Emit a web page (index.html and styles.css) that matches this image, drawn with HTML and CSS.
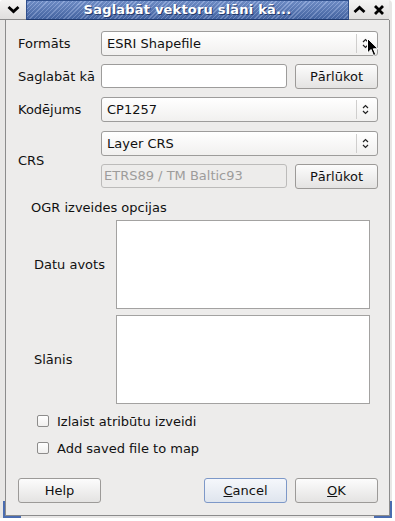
FILE: index.html
```html
<!DOCTYPE html>
<html lang="lv">
<head>
    <meta charset="UTF-8">
    <title>Saglabāt vektoru slāni kā...</title>
    <link rel="stylesheet" href="styles.css">
</head>
<body>
    <div class="window">
        <!-- Loga virsraksts -->
        <div class="titlebar">
            <div class="tb-button tb-menu">
                <svg width="13" height="9" viewBox="0 0 13 9"><path d="M1.5 2 L6.5 6.5 L11.5 2" fill="none" stroke="#000" stroke-width="2.8"/></svg>
            </div>
            <div class="tb-title">Saglabāt vektoru slāni kā...</div>
            <div class="tb-button">
                <svg width="13" height="9" viewBox="0 0 13 9"><path d="M1.5 7 L6.5 2.5 L11.5 7" fill="none" stroke="#000" stroke-width="2.8"/></svg>
            </div>
            <div class="tb-button">
                <svg width="12" height="12" viewBox="0 0 12 12"><path d="M2 2 L10 10 M10 2 L2 10" fill="none" stroke="#000" stroke-width="2.8"/></svg>
            </div>
        </div>

        <div class="client">
            <div class="row first">
                <span class="label">Formāts</span>
                <div class="combo">
                    <span class="combo-text">ESRI Shapefile</span>
                    <span class="combo-sep"></span>
                    <svg class="combo-arrow" width="7" height="11" viewBox="0 0 7 11"><path d="M1 4 L3.5 1.5 L6 4 M1 7 L3.5 9.5 L6 7" fill="none" stroke="#222" stroke-width="1.2"/></svg>
                </div>
            </div>

            <div class="row">
                <span class="label">Saglabāt kā</span>
                <div class="field-pair">
                    <div class="entry"></div>
                    <button class="btn browse">Pārlūkot</button>
                </div>
            </div>

            <div class="row">
                <span class="label">Kodējums</span>
                <div class="combo">
                    <span class="combo-text">CP1257</span>
                    <span class="combo-sep"></span>
                    <svg class="combo-arrow" width="7" height="11" viewBox="0 0 7 11"><path d="M1 4 L3.5 1.5 L6 4 M1 7 L3.5 9.5 L6 7" fill="none" stroke="#222" stroke-width="1.2"/></svg>
                </div>
            </div>

            <div class="row crs">
                <span class="label">CRS</span>
                <div class="crs-fields">
                    <div class="combo">
                        <span class="combo-text">Layer CRS</span>
                        <span class="combo-sep"></span>
                        <svg class="combo-arrow" width="7" height="11" viewBox="0 0 7 11"><path d="M1 4 L3.5 1.5 L6 4 M1 7 L3.5 9.5 L6 7" fill="none" stroke="#222" stroke-width="1.2"/></svg>
                    </div>
                    <div class="field-pair">
                        <div class="entry disabled">ETRS89 / TM Baltic93</div>
                        <button class="btn browse">Pārlūkot</button>
                    </div>
                </div>
            </div>

            <!-- OGR opcijas -->
            <div class="group-title">OGR izveides opcijas</div>
            <div class="group">
                <div class="group-row">
                    <span class="group-label">Datu avots</span>
                    <div class="textarea"></div>
                </div>
                <div class="group-row second">
                    <span class="group-label">Slānis</span>
                    <div class="textarea"></div>
                </div>
            </div>

            <label class="check first">
                <span class="box"></span>
                <span>Izlaist atribūtu izveidi</span>
            </label>
            <label class="check">
                <span class="box"></span>
                <span>Add saved file to map</span>
            </label>

            <div class="buttons">
                <button class="btn">Help</button>
                <div class="spacer"></div>
                <button class="btn focused"><u>C</u>ancel</button>
                <button class="btn"><u>O</u>K</button>
            </div>

            <span class="corner left"></span>
            <span class="corner right"></span>
        </div>

        <!-- peles kursors -->
        <svg class="cursor" width="12" height="19" viewBox="0 0 12 19"><path d="M0.5 0.5 L0.5 15 L4 11.5 L6.5 17.5 L8.8 16.5 L6.3 10.8 L11 10.8 Z" fill="#000" stroke="#fff" stroke-width="1"/></svg>
    </div>
</body>
</html>
```

FILE: styles.css
```css
body {
    margin: 0;
    background-color: #fff;
    font-family: "DejaVu Sans", sans-serif;
    font-size: 13px;
    color: #111;
}

.window {
    position: relative;
    width: 392px;
    height: 518px;
    background-color: #e8e7e6;
    border-radius: 4px 4px 0 0;
    display: flex;
    flex-direction: column;
}

.titlebar {
    display: flex;
    height: 20px;
}

.tb-button {
    width: 20px;
    height: 19px;
    display: flex;
    align-items: center;
    justify-content: center;
    background: linear-gradient(#f4f4f3, #e0dfde);
    border-bottom: 1px solid #8c8c8c;
}

.tb-menu {
    width: 26px;
    border-radius: 4px 0 0 0;
}

.tb-title {
    width: 321px;
    height: 18px;
    border: 1px solid #2f4f8c;
    border-bottom-color: #1f3a70;
    background:
        linear-gradient(rgba(255, 255, 255, 0.18), rgba(0, 0, 0, 0.12)),
        repeating-linear-gradient(135deg, #4d71b6 0, #4d71b6 2px, #7896d2 2px, #7896d2 3px);
    color: #fff;
    font-weight: bold;
    font-size: 13px;
    line-height: 18px;
    text-align: center;
    text-shadow: 1px 1px 0 #23396b;
    letter-spacing: 0.2px;
}

.client {
    position: relative;
    margin: 0 2px 0 5px;
    height: 495px;
    border: 1px solid #8c8c8c;
    border-top: 0;
    background-color: #edeceb;
    padding: 0 11px 0 12px;
}

.row {
    display: flex;
    align-items: center;
    margin-top: 8px;
}

.row.first {
    margin-top: 11px;
}

.row.crs {
    margin-top: 9px;
}

.label {
    width: 83px;
    flex-shrink: 0;
}

.combo {
    width: 277px;
    height: 25px;
    box-sizing: border-box;
    border: 1px solid #9d9c9b;
    border-radius: 3px;
    background: linear-gradient(#ffffff, #f1f0ef);
    display: flex;
    align-items: center;
}

.combo-text {
    flex: 1;
    padding-left: 5px;
}

.combo-sep {
    width: 1px;
    height: 19px;
    background-color: #cfcecd;
    margin-right: 5px;
}

.combo-arrow {
    margin-right: 8px;
}

.field-pair {
    display: flex;
    gap: 8px;
}

.entry {
    width: 186px;
    height: 24px;
    box-sizing: border-box;
    border: 1px solid #9d9c9b;
    border-radius: 3px;
    background-color: #fff;
    padding-left: 2px;
    line-height: 22px;
}

.entry.disabled {
    background-color: #edeceb;
    border-color: #bcbbba;
    color: #9d9c9b;
}

.crs-fields {
    display: flex;
    flex-direction: column;
    gap: 8px;
}

.btn {
    width: 83px;
    height: 25px;
    box-sizing: border-box;
    border: 1px solid #9c9a98;
    border-radius: 3px;
    background: linear-gradient(#fcfcfc, #e4e3e2);
    font-family: "DejaVu Sans", sans-serif;
    font-size: 13px;
    color: #111;
    padding: 0;
}

.btn.focused {
    border-color: #7d98c8;
    background: linear-gradient(#f5f7fb, #dfe5ee);
}

.group-title {
    margin: 11px 0 0 13px;
    height: 16px;
    line-height: 16px;
}

.group {
    margin-top: 4px;
    padding-left: 16px;
}

.group-row {
    display: flex;
    align-items: center;
}

.group-row.second {
    margin-top: 6px;
}

.group-label {
    width: 82px;
}

.textarea {
    width: 254px;
    height: 89px;
    box-sizing: border-box;
    border: 1px solid #a3a2a1;
    background-color: #fff;
}

.check {
    display: flex;
    align-items: center;
    height: 18px;
    margin-top: 9px;
    padding-left: 19px;
    gap: 8px;
}

.check.first {
    margin-top: 8px;
}

.box {
    width: 12px;
    height: 12px;
    box-sizing: border-box;
    border: 1px solid #8d8c8b;
    border-radius: 2px;
    background: linear-gradient(#ffffff, #f0efee);
}

.buttons {
    display: flex;
    margin-top: 21px;
    gap: 8px;
}

.spacer {
    flex: 1;
}

.corner {
    position: absolute;
    bottom: -3px;
    width: 18px;
    height: 17px;
    box-sizing: border-box;
    border-bottom: 2px solid #4a6cb0;
}

.corner.left {
    left: -3px;
    border-left: 2px solid #4a6cb0;
}

.corner.right {
    right: -3px;
    border-right: 2px solid #4a6cb0;
}

.cursor {
    position: absolute;
    left: 367px;
    top: 38px;
}
```
